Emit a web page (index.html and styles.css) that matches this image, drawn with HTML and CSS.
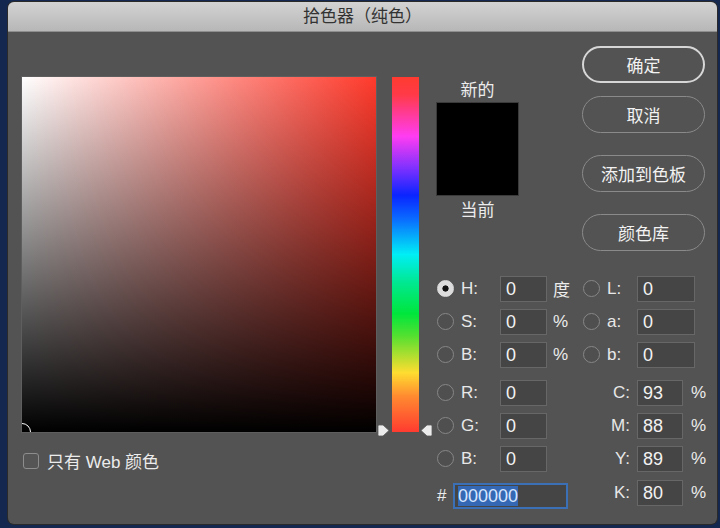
FILE: index.html
```html
<!DOCTYPE html>
<html lang="zh-CN">
<head>
<meta charset="utf-8">
<title>拾色器（纯色）</title>
<link rel="stylesheet" href="styles.css">
</head>
<body>
<div class="dialog">
  <div class="titlebar">拾色器（纯色）</div>
  <div class="content">
    <div class="col-field">
      <div class="field"><span class="marker"></span></div>
      <div class="webonly"><span class="checkbox"></span><span>只有 Web 颜色</span></div>
    </div>
    <div class="col-hue">
      <div class="hue">
        <svg class="tri tri-left" width="13" height="13" viewBox="0 0 13 13"><path d="M1 2.2 Q1 1 2.2 1 H6 L12 6.5 L6 12 H2.2 Q1 12 1 10.8 Z" fill="#ececec" stroke="#5c5c5c" stroke-width="0.8"/></svg>
        <svg class="tri tri-right" width="13" height="13" viewBox="0 0 13 13"><path d="M12 2.2 Q12 1 10.8 1 H7 L1 6.5 L7 12 H10.8 Q12 12 12 10.8 Z" fill="#ececec" stroke="#5c5c5c" stroke-width="0.8"/></svg>
      </div>
    </div>
    <div class="col-main">
      <div class="top">
        <div class="swatch-col">
          <div class="cap cap-new">新的</div>
          <div class="swatch"></div>
          <div class="cap cap-cur">当前</div>
        </div>
        <div class="buttons">
          <div class="btn primary">确定</div>
          <div class="btn">取消</div>
          <div class="btn gap-l">添加到色板</div>
          <div class="btn gap-l">颜色库</div>
        </div>
      </div>
      <div class="fields">
        <div class="sub sub-left">
          <div class="group">
            <div class="row"><span class="radio on"></span><span class="lbl">H:</span><span class="inp">0</span><span class="unit">度</span></div>
            <div class="row"><span class="radio"></span><span class="lbl">S:</span><span class="inp">0</span><span class="unit">%</span></div>
            <div class="row"><span class="radio"></span><span class="lbl">B:</span><span class="inp">0</span><span class="unit">%</span></div>
          </div>
          <div class="group group-2">
            <div class="row"><span class="radio"></span><span class="lbl">R:</span><span class="inp">0</span></div>
            <div class="row"><span class="radio"></span><span class="lbl">G:</span><span class="inp">0</span></div>
            <div class="row"><span class="radio"></span><span class="lbl">B:</span><span class="inp">0</span></div>
          </div>
          <div class="row hex-row"><span class="hash">#</span><span class="hex"><span class="sel">000000</span></span></div>
        </div>
        <div class="sub sub-right">
          <div class="group">
            <div class="row"><span class="radio"></span><span class="lbl lbl-lab">L:</span><span class="inp inp-lab">0</span></div>
            <div class="row"><span class="radio"></span><span class="lbl lbl-lab">a:</span><span class="inp inp-lab">0</span></div>
            <div class="row"><span class="radio"></span><span class="lbl lbl-lab">b:</span><span class="inp inp-lab">0</span></div>
          </div>
          <div class="group group-2">
            <div class="row"><span class="lbl lbl-cmyk">C:</span><span class="inp inp-cmyk">93</span><span class="unit unit-cmyk">%</span></div>
            <div class="row"><span class="lbl lbl-cmyk">M:</span><span class="inp inp-cmyk">88</span><span class="unit unit-cmyk">%</span></div>
            <div class="row"><span class="lbl lbl-cmyk">Y:</span><span class="inp inp-cmyk">89</span><span class="unit unit-cmyk">%</span></div>
            <div class="row row-k"><span class="lbl lbl-cmyk">K:</span><span class="inp inp-cmyk">80</span><span class="unit unit-cmyk">%</span></div>
          </div>
        </div>
      </div>
    </div>
  </div>
</div>
</body>
</html>
```
FILE: styles.css
```css
* { box-sizing: border-box; }
html, body { margin: 0; height: 100%; }
body {
  background: #14284f;
  padding: 2px 3px 4px 8px;
  font-family: "Liberation Sans", "Noto Sans CJK SC", sans-serif;
  font-size: 17px;
  color: #ececec;
  overflow: hidden;
}
.dialog {
  width: 709px;
  height: 522px;
  background: #535353;
  border-radius: 6px;
  overflow: hidden;
  display: flex;
  flex-direction: column;
  box-shadow: 0 0 0 1px #2a2a2a;
}
.titlebar {
  height: 30px;
  flex: none;
  background: linear-gradient(#d3d3d3, #b7b7b7);
  border-bottom: 1px solid #8e8e8e;
  color: #333;
  text-align: center;
  line-height: 30px;
  font-size: 17px;
}
.content {
  flex: 1;
  display: flex;
  align-items: flex-start;
  padding-left: 14px;
}
.col-field { width: 354px; margin-top: 45px; flex: none; }
.field {
  position: relative;
  width: 354px;
  height: 355px;
  overflow: hidden;
  background:
    linear-gradient(to top, #000, rgba(0,0,0,0)),
    linear-gradient(to right, #fff, #ff3a2c);
  box-shadow: 0 0 0 1px #5e5e5e;
}
.marker {
  position: absolute;
  left: -9px;
  bottom: -9px;
  width: 18px;
  height: 18px;
  border: 1.5px solid #fff;
  border-radius: 50%;
}
.webonly {
  display: flex;
  align-items: center;
  margin-top: 21px;
  height: 15px;
  white-space: nowrap;
}
.checkbox {
  width: 16px;
  height: 16px;
  margin-left: 1px;
  margin-right: 8px;
  border: 1px solid #8d8d8d;
  border-radius: 3px;
  background: #555;
}
.col-hue { width: 60px; padding-left: 16px; margin-top: 45px; flex: none; }
.hue {
  position: relative;
  width: 27px;
  height: 355px;
  background: linear-gradient(to bottom,
    #ff3b30 0%, #ff3a48 5%, #ff3cf2 16.7%, #7a30ff 26%, #0a24ff 33.3%, #0a6bff 40%,
    #00eef5 50%, #00e890 58%, #00e63c 66.7%, #55e030 73%, #ffdd30 83.3%, #ff8a30 90%, #ff3b30 100%);
}
.tri { position: absolute; top: 347px; }
.tri-left { left: -15px; }
.tri-right { left: 28px; }
.col-main { flex: 1; display: flex; flex-direction: column; }
.top { height: 240px; display: flex; }
.swatch-col { width: 83px; display: flex; flex-direction: column; align-items: center; }
.cap { line-height: 18px; height: 18px; }
.cap-new { margin-top: 50px; }
.swatch {
  width: 83px;
  height: 94px;
  margin-top: 2px;
  background: #000;
  border: 1px solid #3a3a3a;
}
.cap-cur { margin-top: 6px; }
.buttons { margin-left: 63px; width: 123px; display: flex; flex-direction: column; padding-top: 14px; }
.btn {
  height: 37px;
  border-radius: 19px;
  border: 1.5px solid #8a8a8a;
  display: flex;
  align-items: center;
  justify-content: center;
  color: #f2f2f2;
  margin-top: 13px;
}
.btn.primary { border: 2px solid #d6d6d6; margin-top: 0; }
.btn.gap-l { margin-top: 22px; }
.fields { display: flex; }
.sub-left { width: 134px; }
.sub-right { margin-left: 13px; }
.group-2 { margin-top: 5px; }
.row { height: 33px; display: flex; align-items: center; white-space: nowrap; }
.radio {
  width: 17px;
  height: 17px;
  margin-left: 1px;
  border-radius: 50%;
  border: 1px solid #878787;
  background: #4f4f4f;
  flex: none;
}
.radio.on {
  background: radial-gradient(circle, #111 0 2.8px, #dcdcdc 3.4px);
  border-color: #dcdcdc;
}
.lbl { margin-left: 7px; width: 39px; color: #e8e8e8; }
.inp {
  width: 47px;
  height: 26px;
  background: #454545;
  border: 1px solid #676767;
  padding-left: 5px;
  font-size: 18px;
  line-height: 24px;
  color: #f2f2f2;
}
.unit { margin-left: 6px; }
.sub-right .radio { margin-left: 0; }
.lbl-lab { width: 30px; }
.inp-lab { width: 58px; }
.lbl-cmyk { margin-left: 0; width: 47px; text-align: right; }
.inp-cmyk { margin-left: 7px; width: 46px; }
.unit-cmyk { margin-left: 8px; }
.row-k { margin-top: 1px; }
.hex-row { margin-top: 4px; height: 34px; }
.hash { width: 16px; margin-left: 1px; }
.hex {
  width: 115px;
  height: 26px;
  background: #454545;
  border: 2px solid #3c70b6;
  padding-left: 3px;
  display: flex;
  align-items: center;
  font-size: 18px;
}
.sel {
  background: #3468b4;
  color: #d6e6ff;
  line-height: 20px;
  height: 20px;
}
```
